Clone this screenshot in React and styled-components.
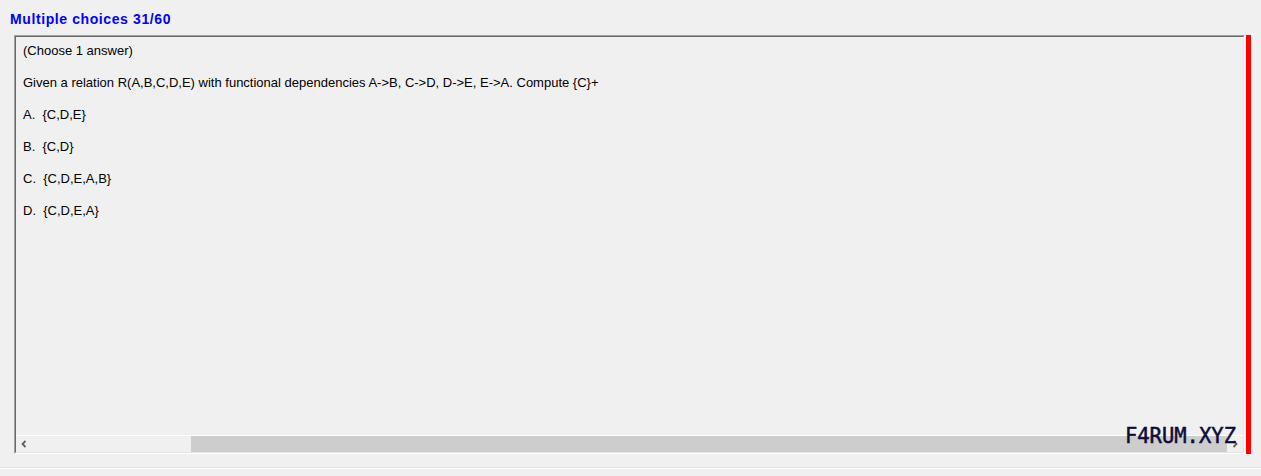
import React from "react";
import styled, { createGlobalStyle } from "styled-components";

const Global = createGlobalStyle`
  html, body { margin: 0; padding: 0; background: #f0f0f0; }
  body { font-family: "Liberation Sans", Arial, sans-serif; }
`;

const Page = styled.div`
  width: 1261px;
  height: 476px;
  background: #f0f0f0;
  display: flex;
  flex-direction: column;
  overflow: hidden;
`;

const Title = styled.div`
  height: 35px;
  box-sizing: border-box;
  padding: 11px 0 0 10px;
  color: #0000ff;
  font-weight: bold;
  font-size: 14px;
  letter-spacing: 0.6px;
  line-height: 16px;
`;

const Row = styled.div`
  display: flex;
  padding-left: 14px;
  gap: 1px;
`;

const Box = styled.div`
  position: relative;
  width: 1231px;
  height: 419px;
  box-sizing: border-box;
  border-top: 1px solid #a0a0a0;
  border-left: 1px solid #a0a0a0;
  border-right: 1px solid #ffffff;
  border-bottom: 1px solid #ffffff;
  display: flex;
  flex-direction: column;
`;

const Inner = styled.div`
  flex: 1;
  display: flex;
  flex-direction: column;
  border-top: 1px solid #696969;
  border-left: 1px solid #696969;
  border-right: 1px solid #e3e3e3;
  border-bottom: 1px solid #e3e3e3;
  min-height: 0;
`;

const Content = styled.div`
  flex: 1;
  display: flex;
  flex-direction: column;
  gap: 17px;
  padding: 6px 0 0 7px;
  font-size: 13px;
  line-height: 15px;
  color: #000;
`;

const Line = styled.div`
  white-space: pre;
`;

const HScroll = styled.div`
  height: 16px;
  border-top: 1px solid #ffffff;
  display: flex;
  align-items: stretch;
  background: #f0f0f0;
`;

const Arrow = styled.div`
  width: 16px;
  display: flex;
  align-items: center;
  justify-content: center;
`;

const Track = styled.div`
  flex: 1;
  display: flex;
  padding: 0 0 0 159px;
`;

const Thumb = styled.div`
  flex: 1;
  background: #cdcdcd;
`;

const RedBar = styled.div`
  width: 5px;
  height: 419px;
  background: #ff0000;
`;

const Watermark = styled.div`
  position: absolute;
  right: 8px;
  bottom: 6px;
  font-family: "DejaVu Sans Mono", monospace;
  font-size: 20.5px;
  line-height: 22px;
  color: #0c0c38;
  -webkit-text-stroke: 0.5px #0c0c38;
`;

const BottomLine = styled.div`
  margin-top: 13px;
  height: 1px;
  background: #e0e0e0;
  border-bottom: 1px solid #ffffff;
`;

const Chevron = ({ dir }) => (
  <svg width="8" height="8" viewBox="0 0 8 8">
    {dir === "left" ? (
      <path d="M5.5 1 L2.5 4 L5.5 7" stroke="#606060" strokeWidth="1.8" fill="none" />
    ) : (
      <path d="M2.5 1 L5.5 4 L2.5 7" stroke="#606060" strokeWidth="1.8" fill="none" />
    )}
  </svg>
);

const lines = [
  "(Choose 1 answer)",
  "Given a relation R(A,B,C,D,E) with functional dependencies A->B, C->D, D->E, E->A. Compute {C}+",
  "A.  {C,D,E}",
  "B.  {C,D}",
  "C.  {C,D,E,A,B}",
  "D.  {C,D,E,A}",
];

export default function App() {
  return (
    <Page>
      <Global />
      <Title>Multiple choices 31/60</Title>
      <Row>
        <Box>
          <Inner>
            <Content>
              {lines.map((l, i) => (
                <Line key={i}>{l}</Line>
              ))}
            </Content>
            <HScroll>
              <Arrow>
                <Chevron dir="left" />
              </Arrow>
              <Track>
                <Thumb />
              </Track>
              <Arrow>
                <Chevron dir="right" />
              </Arrow>
            </HScroll>
          </Inner>
          <Watermark>F4RUM.XYZ</Watermark>
        </Box>
        <RedBar />
      </Row>
      <BottomLine />
    </Page>
  );
}
